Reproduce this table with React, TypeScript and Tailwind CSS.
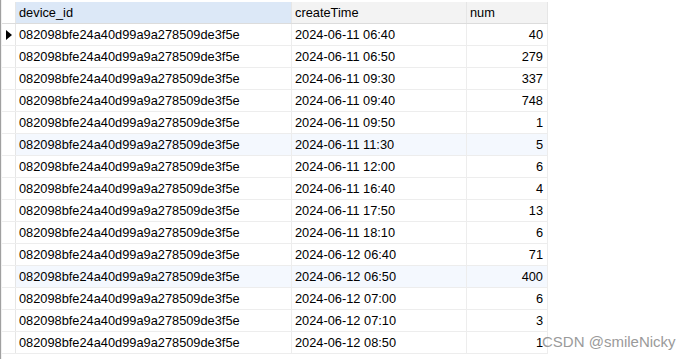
const rows: [string, number][] = [
  ['2024-06-11 06:40', 40],
  ['2024-06-11 06:50', 279],
  ['2024-06-11 09:30', 337],
  ['2024-06-11 09:40', 748],
  ['2024-06-11 09:50', 1],
  ['2024-06-11 11:30', 5],
  ['2024-06-11 12:00', 6],
  ['2024-06-11 16:40', 4],
  ['2024-06-11 17:50', 13],
  ['2024-06-11 18:10', 6],
  ['2024-06-12 06:40', 71],
  ['2024-06-12 06:50', 400],
  ['2024-06-12 07:00', 6],
  ['2024-06-12 07:10', 3],
  ['2024-06-12 08:50', 1],
];

const DEVICE = '082098bfe24a40d99a9a278509de3f5e';

const App = () => {
  return (
    <div
      className="relative w-[692px] h-[359px] overflow-hidden bg-white text-[12.8px] text-black"
      style={{ fontFamily: '"Liberation Sans", Arial, sans-serif' }}
    >
      <div className="flex h-full">
        <div className="w-[1px] bg-[#a0a0a0]" />
        <div className="w-[1px] bg-[#f0f0f0]" />
        <div className="pt-[2px]">
          {/* header */}
          <div className="grid grid-cols-[14px_276px_175px_81px] h-[22px] border-b border-[#dcdcdc]">
            <div className="bg-white border-r border-[#e6e6e6]" />
            <div className="bg-[#dce8f7] border-r border-[#e6e6e6] pl-[3px] leading-[21px]">device_id</div>
            <div className="bg-[#f3f3f3] border-r border-[#e6e6e6] pl-[3px] leading-[21px]">createTime</div>
            <div className="bg-[#f3f3f3] border-r border-[#e6e6e6] pl-[3px] leading-[21px]">num</div>
          </div>
          {rows.map(([time, num], i) => (
            <div
              key={i}
              className={`grid grid-cols-[14px_276px_175px_81px] h-[22px] border-b border-[#ededed] ${
                i === 5 || i === 11 ? 'bg-[#f4f8fe]' : 'bg-white'
              }`}
            >
              <div className="flex items-center justify-center border-r border-[#e6e6e6] bg-white">
                {i === 0 && (
                  <svg width="6" height="10" viewBox="0 0 6 10">
                    <path d="M0 0 L6 5 L0 10 Z" fill="#000" />
                  </svg>
                )}
              </div>
              <div className="border-r border-[#ededed] pl-[3px] leading-[21px]">{DEVICE}</div>
              <div className="border-r border-[#ededed] pl-[3px] leading-[21px]">{time}</div>
              <div className="border-r border-[#ededed] pr-[4px] text-right leading-[21px]">{num}</div>
            </div>
          ))}
        </div>
      </div>
      <div className="absolute left-[542px] top-[332px] text-[15px] text-[#9a9a9a] leading-[20px]">
        CSDN @smileNicky
      </div>
    </div>
  );
};

export default App;
